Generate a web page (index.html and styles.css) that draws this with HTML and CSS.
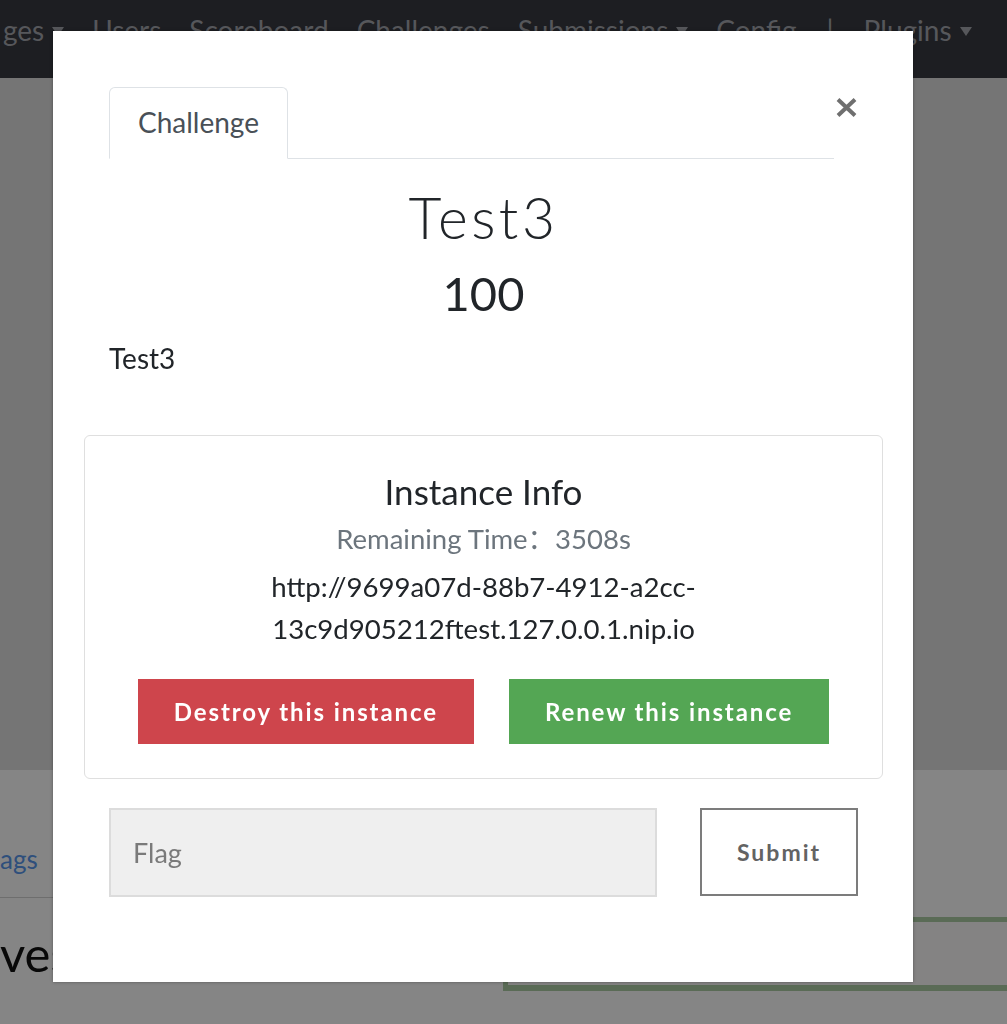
FILE: index.html
```html
<!DOCTYPE html>
<html lang="en">
<head>
<meta charset="utf-8">
<title>Challenge</title>
<link rel="stylesheet" href="styles.css">
</head>
<body>
<nav class="navbar">
  <ul class="nav-links">
    <li class="nav-item dropdown">ges</li>
    <li class="nav-item">Users</li>
    <li class="nav-item">Scoreboard</li>
    <li class="nav-item">Challenges</li>
    <li class="nav-item dropdown">Submissions</li>
    <li class="nav-item">Config</li>
    <li class="nav-sep">|</li>
    <li class="nav-item dropdown">Plugins</li>
  </ul>
</nav>
<header class="jumbotron"></header>
<main class="content">
  <section class="left-col">
    <div class="sub-tabs"><span class="sub-tab">ags</span></div>
    <h2 class="section-title">ves</h2>
  </section>
  <section class="right-col">
    <div class="status-box"></div>
  </section>
</main>
<div class="backdrop"></div>
<div class="modal" role="dialog">
  <div class="modal-header">
    <ul class="tabs"><li class="tab">Challenge</li></ul>
    <button class="close" type="button" aria-label="Close">
      <svg width="21" height="19" viewBox="0 0 21 19"><path d="M2 1.5 L19 17.5 M19 1.5 L2 17.5" stroke="#6f6f6f" stroke-width="4" fill="none"/></svg>
    </button>
  </div>
  <h1 class="chal-name">Test3</h1>
  <h2 class="chal-value">100</h2>
  <p class="chal-desc">Test3</p>
  <div class="instance-card">
    <h3 class="instance-title">Instance Info</h3>
    <p class="remaining">Remaining Time：3508s</p>
    <p class="instance-url">http://9699a07d-88b7-4912-a2cc-<br>13c9d905212ftest.127.0.0.1.nip.io</p>
    <div class="instance-actions">
      <button class="btn btn-danger" type="button">Destroy this instance</button>
      <button class="btn btn-success" type="button">Renew this instance</button>
    </div>
  </div>
  <form class="flag-row">
    <input class="flag-input" type="text" placeholder="Flag">
    <button class="btn-submit" type="button">Submit</button>
  </form>
</div>
</body>
</html>
```
FILE: styles.css
```css
* { box-sizing: border-box; }
html, body { margin: 0; padding: 0; }
body {
  font-family: "Lato", "Noto Sans CJK SC", sans-serif;
  background: #fff;
  color: #212529;
  width: 1007px;
  height: 1024px;
  overflow: hidden;
  position: relative;
}

/* navbar */
.navbar {
  height: 78px;
  background: #383a41;
}
.nav-links {
  list-style: none;
  margin: 0;
  padding: 13px 0 0 3px;
  display: flex;
  gap: 28px;
  font-size: 28px;
  line-height: 34px;
  color: #a5a8af;
  white-space: nowrap;
}
.dropdown::after {
  content: "";
  display: inline-block;
  margin-left: 8px;
  vertical-align: 5px;
  border-top: 9px solid;
  border-left: 6px solid transparent;
  border-right: 6px solid transparent;
}
.nav-sep { margin: 0 2px; }

/* page underneath */
.jumbotron {
  height: 692px;
  background: #e1e1e1;
}
.content {
  display: grid;
  grid-template-columns: 503px 1fr;
  height: 254px;
}
.left-col { padding-top: 60px; }
.sub-tabs {
  height: 68px;
  border-bottom: 1px solid #d4d4d4;
  padding-top: 10px;
}
.sub-tab {
  display: block;
  font-size: 26px;
  line-height: 39px;
  color: #5998ed;
}
.section-title {
  margin: 26px 0 0;
  font-size: 49px;
  line-height: 58px;
  font-weight: 400;
  color: #111;
}
.right-col { padding-top: 147px; }
.status-box {
  height: 74px;
  border: 5px solid #adcea5;
  border-bottom-width: 6px;
  border-right: 0;
  background: #fdfbfb;
}

.backdrop {
  position: fixed;
  inset: 0;
  background: rgba(0, 0, 0, 0.48);
}

/* modal */
.modal {
  position: absolute;
  left: 53px;
  top: 31px;
  width: 860px;
  background: #fff;
  padding: 56px 30px 85px 31px;
  box-shadow: 0 0 3px rgba(0, 0, 0, 0.35);
}
.modal-header {
  display: flex;
  align-items: flex-start;
  margin: 0 26px 0 25px;
}
.tabs {
  flex: 1;
  list-style: none;
  margin: 0;
  padding: 0;
  display: flex;
  border-bottom: 1px solid #dee2e6;
}
.tab {
  font-size: 28px;
  line-height: 31px;
  padding: 19px 28px 20px;
  border: 1px solid #dee2e6;
  border-bottom-color: #fff;
  border-radius: 6px 6px 0 0;
  margin-bottom: -1px;
  color: #495057;
  background: #fff;
}
.close {
  width: 23px;
  margin-top: 11px;
  padding: 0;
  border: 0;
  background: none;
  display: flex;
  justify-content: flex-end;
  cursor: pointer;
}

.chal-name {
  margin: 24px 25px 0;
  text-align: center;
  font-size: 57px;
  font-weight: 300;
  line-height: 1.2;
  letter-spacing: 3.5px;
  color: #212529;
}
.chal-value {
  margin: 14px 25px 0;
  text-align: center;
  font-size: 47px;
  font-weight: 400;
  line-height: 1.2;
}
.chal-desc {
  margin: 16px 25px 0;
  font-size: 28px;
  line-height: 40px;
}

.instance-card {
  margin-top: 57px;
  border: 1px solid #dfdfdf;
  border-radius: 6px;
  padding: 34px 0;
  text-align: center;
}
.instance-title {
  margin: 0;
  font-size: 35px;
  font-weight: 400;
  line-height: 42px;
}
.remaining {
  margin: 6px 0 0;
  font-size: 27.5px;
  line-height: 42px;
  color: #6c757d;
}
.instance-url {
  margin: 6px 0 0;
  font-size: 27.6px;
  line-height: 42px;
}
.instance-actions {
  margin-top: 29px;
  display: flex;
  justify-content: center;
  gap: 35px;
}
.btn {
  height: 65px;
  padding: 0 36px;
  border: 0;
  color: #fff;
  font-family: "Lato", sans-serif;
  font-weight: 700;
  font-size: 24px;
  letter-spacing: 1.9px;
}
.btn-danger { background: #ce454c; }
.btn-success { background: #54a654; }

.flag-row {
  margin: 29px 25px 0;
  display: flex;
  justify-content: space-between;
}
.flag-input {
  width: 548px;
  height: 89px;
  background: #efefef;
  border: 2px solid #dcdcdc;
  padding: 0 22px;
  font-family: "Lato", sans-serif;
  font-size: 27px;
  color: #555;
  outline: none;
}
.flag-input::placeholder { color: #7a7a7a; }
.btn-submit {
  width: 158px;
  height: 88px;
  background: #fff;
  border: 2px solid #7c7c7c;
  font-family: "Lato", sans-serif;
  font-weight: 700;
  font-size: 23px;
  letter-spacing: 2px;
  color: #636363;
}
```
